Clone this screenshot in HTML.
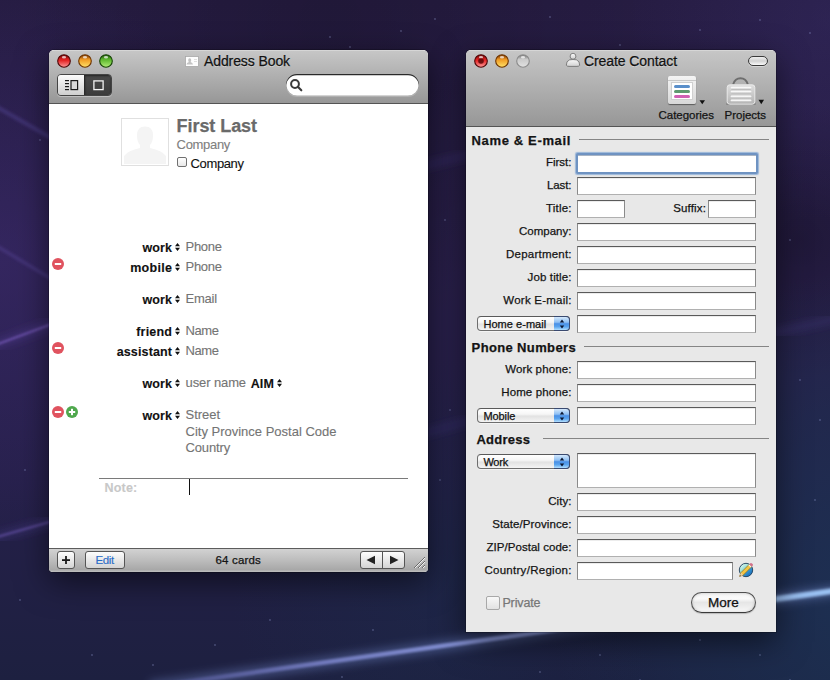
<!DOCTYPE html>
<html><head><meta charset="utf-8">
<style>
*{box-sizing:border-box;margin:0;padding:0}
html,body{width:830px;height:680px;overflow:hidden}
body{position:relative;font-family:"Liberation Sans",sans-serif;
background:linear-gradient(180deg,#261c42 0%,#2a204c 40%,#26204a 70%,#1d2040 100%);}
.a{position:absolute}
.t{position:absolute;white-space:nowrap;line-height:1;-webkit-text-stroke:0.12px currentColor}
.s2{-webkit-text-stroke:0.25px currentColor}
.win{position:absolute;overflow:hidden}
#w1{left:49px;top:50px;width:379px;height:522px;border-radius:5px 5px 4px 4px;background:#fff;
 box-shadow:0 10px 32px rgba(0,0,0,0.55),0 0 0 1px rgba(0,0,0,0.2)}
#w2{left:466px;top:50px;width:310px;height:582px;border-radius:5px 5px 0 0;background:#e8e8e8;
 box-shadow:0 10px 32px rgba(0,0,0,0.55),0 0 0 1px rgba(0,0,0,0.2)}
.tb{position:absolute;left:0;top:0;width:100%;background:linear-gradient(180deg,#e6e6e6 0px,#c6c6c6 1px,#979797 100%);border-bottom:1px solid #545454}
.tl{position:absolute;width:14px;height:14px;border-radius:50%}
.red{background:radial-gradient(circle at 50% 20%,#ffe6e6 0,#ffb0b0 10%,rgba(255,80,80,0) 32%),radial-gradient(circle at 50% 80%,#ffb0b0 0,#f04040 40%,#c01616 72%,#7e0c0c 100%);box-shadow:0 0 0 0.6px rgba(90,10,10,0.8)}
.yel{background:radial-gradient(circle at 50% 20%,#fff6dc 0,#ffe0a0 10%,rgba(255,200,80,0) 32%),radial-gradient(circle at 50% 80%,#ffe680 0,#f5ae2a 40%,#c97a06 72%,#7a4800 100%);box-shadow:0 0 0 0.6px rgba(100,60,0,0.8)}
.grn{background:radial-gradient(circle at 50% 20%,#f0ffe0 0,#c8f4a8 10%,rgba(160,230,100,0) 32%),radial-gradient(circle at 50% 80%,#c4f49a 0,#72c840 40%,#3c9418 72%,#1d5a06 100%);box-shadow:0 0 0 0.6px rgba(20,70,5,0.8)}
.gry{background:radial-gradient(circle at 50% 20%,#fcfcfc 0,#eeeeee 10%,rgba(230,230,230,0) 32%),radial-gradient(circle at 50% 80%,#ececec 0,#d2d2d2 40%,#b4b4b4 72%,#8c8c8c 100%);box-shadow:0 0 0 0.6px rgba(110,110,110,0.8)}
.fld{position:absolute;background:#fff;border:1px solid #8a8a8a;border-top-color:#5a5a5a;border-bottom-color:#b0b0b0;box-shadow:inset 0 1px 0 #ececec}
.pop{position:absolute;height:15px;border-radius:4px;border:1px solid #6e6e6e;border-top-color:#5a5a5a;background:linear-gradient(180deg,#ffffff 0%,#f6f6f6 40%,#e2e2e2 55%,#f4f4f4 100%);box-shadow:0 1px 0 rgba(255,255,255,0.5)}
.pop .arr{position:absolute;right:-1px;top:-1px;width:16px;height:15px;border-radius:0 4px 4px 0;border:1px solid #3a4a70;border-left:none;background:linear-gradient(180deg,#d4e8fc 0%,#8fc0f4 40%,#4a90e6 52%,#5aa4ee 75%,#b4e0ff 100%)}
.circ{position:absolute;width:12px;height:12px;border-radius:50%}
</style></head><body>
<svg class="a" style="left:0;top:0" width="830" height="680">
<defs>
<radialGradient id="gpurp" cx="0" cy="260" r="280" gradientUnits="userSpaceOnUse">
 <stop offset="0" stop-color="#3e2c72" stop-opacity="0.5"/><stop offset="1" stop-color="#3a2a70" stop-opacity="0"/></radialGradient>
<radialGradient id="gblue" cx="880" cy="600" r="330" gradientUnits="userSpaceOnUse">
 <stop offset="0" stop-color="#1c3456" stop-opacity="0.85"/><stop offset="0.6" stop-color="#1c3050" stop-opacity="0.5"/><stop offset="1" stop-color="#1c3050" stop-opacity="0"/></radialGradient>
<linearGradient id="streak1" x1="150" y1="687" x2="840" y2="590" gradientUnits="userSpaceOnUse">
 <stop offset="0" stop-color="#6a6ab8" stop-opacity="0.3"/><stop offset="0.25" stop-color="#8088d0" stop-opacity="0.8"/><stop offset="0.6" stop-color="#94a4e8" stop-opacity="0.95"/><stop offset="1" stop-color="#98c4f4" stop-opacity="1"/></linearGradient>
<filter id="blur1"><feGaussianBlur stdDeviation="0.9"/></filter>
<filter id="blur2"><feGaussianBlur stdDeviation="1.6"/></filter>
<filter id="blur5"><feGaussianBlur stdDeviation="4"/></filter>
</defs>
<radialGradient id="gdark" cx="330" cy="20" r="320" gradientUnits="userSpaceOnUse">
 <stop offset="0" stop-color="#000" stop-opacity="0.16"/><stop offset="1" stop-color="#000" stop-opacity="0"/></radialGradient>
<radialGradient id="gtr" cx="830" cy="20" r="200" gradientUnits="userSpaceOnUse">
 <stop offset="0" stop-color="#3a3070" stop-opacity="0.35"/><stop offset="1" stop-color="#3a3070" stop-opacity="0"/></radialGradient>
<radialGradient id="gdark2" cx="800" cy="240" r="140" gradientUnits="userSpaceOnUse">
 <stop offset="0" stop-color="#000" stop-opacity="0.25"/><stop offset="1" stop-color="#000" stop-opacity="0"/></radialGradient>
<rect width="830" height="680" fill="url(#gdark)"/>
<rect width="830" height="680" fill="url(#gdark2)"/>
<rect width="830" height="680" fill="url(#gtr)"/>
<rect width="830" height="680" fill="url(#gpurp)"/>
<radialGradient id="gblue2" cx="450" cy="580" r="220" gradientUnits="userSpaceOnUse">
 <stop offset="0" stop-color="#1c2c4c" stop-opacity="0.5"/><stop offset="1" stop-color="#1c2c4c" stop-opacity="0"/></radialGradient>
<rect width="830" height="680" fill="url(#gblue)"/>
<rect width="830" height="680" fill="url(#gblue2)"/>
<path d="M150 687 L 840 590" stroke="#7890d8" stroke-opacity="0.35" stroke-width="12" fill="none" filter="url(#blur5)"/>
<path d="M150 687 L 840 590" stroke="url(#streak1)" stroke-width="4.5" fill="none" filter="url(#blur1)"/>
<path d="M620 621 L 840 590" stroke="#a0c4f4" stroke-opacity="0.45" stroke-width="7" fill="none" filter="url(#blur2)"/>
<path d="M-10 347 L 60 321" stroke="#8060c0" stroke-opacity="0.75" stroke-width="2.2" fill="none" filter="url(#blur1)"/>
<path d="M-10 347 L 60 321" stroke="#6048a8" stroke-opacity="0.3" stroke-width="9" fill="none" filter="url(#blur5)"/>
<path d="M-10 539 L 60 519" stroke="#7a64c0" stroke-opacity="0.6" stroke-width="2" fill="none" filter="url(#blur1)"/>
<path d="M-10 539 L 60 519" stroke="#5a48a8" stroke-opacity="0.3" stroke-width="8" fill="none" filter="url(#blur5)"/>
<path d="M-10 242 L 60 284" stroke="#5a48a0" stroke-opacity="0.45" stroke-width="3" fill="none" filter="url(#blur2)"/>
<path d="M-10 103 L 60 143" stroke="#5a48a0" stroke-opacity="0.4" stroke-width="4" fill="none" filter="url(#blur2)"/>
<path d="M400 440 L 480 418" stroke="#4a4090" stroke-opacity="0.35" stroke-width="6" fill="none" filter="url(#blur5)"/>
<path d="M400 172 L 480 152" stroke="#4a4090" stroke-opacity="0.35" stroke-width="6" fill="none" filter="url(#blur5)"/>
<path d="M770 334 L 840 318" stroke="#5a4aa0" stroke-opacity="0.3" stroke-width="6" fill="none" filter="url(#blur5)"/>
<circle cx="107" cy="61" r="0.9" fill="#a0a8e0" opacity="0.35"/>
<circle cx="350" cy="47" r="0.9" fill="#a0a8e0" opacity="0.35"/>
<circle cx="330" cy="37" r="0.9" fill="#a0a8e0" opacity="0.35"/>
<circle cx="401" cy="31" r="0.9" fill="#a0a8e0" opacity="0.35"/>
<circle cx="435" cy="19" r="0.9" fill="#a0a8e0" opacity="0.35"/>
<circle cx="550" cy="17" r="0.9" fill="#a0a8e0" opacity="0.35"/>
<circle cx="620" cy="45" r="0.9" fill="#a0a8e0" opacity="0.35"/>
<circle cx="700" cy="30" r="0.9" fill="#a0a8e0" opacity="0.35"/>
<circle cx="760" cy="20" r="0.9" fill="#a0a8e0" opacity="0.35"/>
<circle cx="810" cy="33" r="0.9" fill="#a0a8e0" opacity="0.35"/>
<circle cx="820" cy="420" r="0.9" fill="#a0a8e0" opacity="0.35"/>
<circle cx="800" cy="380" r="0.9" fill="#a0a8e0" opacity="0.35"/>
<circle cx="20" cy="600" r="0.9" fill="#a0a8e0" opacity="0.35"/>
<circle cx="92" cy="655" r="0.9" fill="#a0a8e0" opacity="0.35"/>
<circle cx="153" cy="665" r="0.9" fill="#a0a8e0" opacity="0.35"/>
<circle cx="215" cy="645" r="0.9" fill="#a0a8e0" opacity="0.35"/>
<circle cx="270" cy="620" r="0.9" fill="#a0a8e0" opacity="0.35"/>
<circle cx="342" cy="677" r="0.9" fill="#a0a8e0" opacity="0.35"/>
<circle cx="373" cy="630" r="0.9" fill="#a0a8e0" opacity="0.35"/>
<circle cx="475" cy="618" r="0.9" fill="#a0a8e0" opacity="0.35"/>
<circle cx="540" cy="672" r="0.9" fill="#a0a8e0" opacity="0.35"/>
<circle cx="640" cy="680" r="0.9" fill="#a0a8e0" opacity="0.35"/>
<circle cx="700" cy="640" r="0.9" fill="#a0a8e0" opacity="0.35"/>
<circle cx="790" cy="680" r="0.9" fill="#a0a8e0" opacity="0.35"/>
<circle cx="40" cy="140" r="0.9" fill="#a0a8e0" opacity="0.35"/>
<circle cx="25" cy="470" r="0.9" fill="#a0a8e0" opacity="0.35"/>
<circle cx="445" cy="220" r="0.9" fill="#a0a8e0" opacity="0.35"/>
<circle cx="450" cy="410" r="0.9" fill="#a0a8e0" opacity="0.35"/>
<circle cx="440" cy="480" r="0.9" fill="#a0a8e0" opacity="0.35"/>
<circle cx="790" cy="240" r="0.9" fill="#a0a8e0" opacity="0.35"/>
<circle cx="815" cy="500" r="0.9" fill="#a0a8e0" opacity="0.35"/>
<circle cx="600" cy="655" r="0.9" fill="#a0a8e0" opacity="0.35"/>
<circle cx="760" cy="655" r="0.9" fill="#a0a8e0" opacity="0.35"/>
</svg>
<div class="win" id="w1">
 <div class="tb" style="height:54px"></div>
 <div class="a" style="left:0;top:498px;width:379px;height:24px;border-top:1px solid #5c5c5c;background:linear-gradient(180deg,#d2d2d2 0%,#bcbcbc 50%,#a8a8a8 90%,#c0c0c0 100%)"></div>
</div>
<svg class="a" width="0" height="0"><defs><linearGradient id="tlsh" x1="0" y1="0" x2="0" y2="1"><stop offset="0" stop-color="#000" stop-opacity="0.35"/><stop offset="0.35" stop-color="#000" stop-opacity="0"/></linearGradient></defs></svg>
<svg class="a" style="left:57px;top:54px" width="14" height="14"><defs><linearGradient id="lg6461" x1="0" y1="0" x2="0" y2="1"><stop offset="0" stop-color="#b81010"/><stop offset="0.45" stop-color="#e42424"/><stop offset="1" stop-color="#ff9c9c"/></linearGradient></defs><circle cx="7" cy="7" r="6.3" fill="url(#lg6461)" stroke="#4a0606" stroke-width="1.1"/><circle cx="7" cy="7" r="5.8" fill="url(#tlsh)"/><ellipse cx="7" cy="3.3" rx="2.1" ry="1.2" fill="#fff" opacity="0.7"/></svg>
<svg class="a" style="left:78px;top:54px" width="14" height="14"><defs><linearGradient id="lg8561" x1="0" y1="0" x2="0" y2="1"><stop offset="0" stop-color="#c86008"/><stop offset="0.45" stop-color="#f2a22a"/><stop offset="1" stop-color="#ffe46a"/></linearGradient></defs><circle cx="7" cy="7" r="6.3" fill="url(#lg8561)" stroke="#6a3200" stroke-width="1.1"/><circle cx="7" cy="7" r="5.8" fill="url(#tlsh)"/><ellipse cx="7" cy="3.3" rx="2.1" ry="1.2" fill="#fff" opacity="0.7"/></svg>
<svg class="a" style="left:99px;top:54px" width="14" height="14"><defs><linearGradient id="lg10661" x1="0" y1="0" x2="0" y2="1"><stop offset="0" stop-color="#3a9216"/><stop offset="0.45" stop-color="#64bc34"/><stop offset="1" stop-color="#b4ee7a"/></linearGradient></defs><circle cx="7" cy="7" r="6.3" fill="url(#lg10661)" stroke="#154006" stroke-width="1.1"/><circle cx="7" cy="7" r="5.8" fill="url(#tlsh)"/><ellipse cx="7" cy="3.3" rx="2.1" ry="1.2" fill="#fff" opacity="0.7"/></svg>
<svg class="a" style="left:184px;top:55px" width="16" height="13"><rect x="1.5" y="1.5" width="13" height="10" fill="#fdfdfd" stroke="#a8a8a8" stroke-width="0.8"/>
<path d="M4.2 5 Q4.2 3.2 5.7 3.2 Q7.2 3.2 7.2 5 Q7.2 6.4 6.5 7 Q8.8 7.6 9 9.6 L2.4 9.6 Q2.6 7.6 4.9 7 Q4.2 6.4 4.2 5Z" fill="#c4c4c4"/>
<rect x="10" y="4" width="3" height="0.8" fill="#d8d8d8"/><rect x="10" y="6" width="3" height="0.8" fill="#d8d8d8"/></svg>
<div class="a" style="left:57px;top:74px;width:55px;height:22px;border-radius:4px;border:1px solid #444;overflow:hidden;box-shadow:0 1px 0 rgba(255,255,255,0.35)">
 <div class="a" style="left:0;top:0;width:26px;height:20px;background:linear-gradient(180deg,#fbfbfb,#cfcfcf)"></div>
 <div class="a" style="left:26px;top:0;width:27px;height:20px;background:linear-gradient(180deg,#4a4a4a,#3c3c3c);border-left:1px solid #2a2a2a;box-shadow:inset 0 1px 2px rgba(0,0,0,0.5)"></div>
</div>
<svg class="a" style="left:57px;top:74px" width="55" height="22">
 <g fill="#1a1a1a"><rect x="8" y="6" width="4" height="1.2"/><rect x="8" y="9" width="4" height="1.2"/><rect x="8" y="12" width="4" height="1.2"/><rect x="8" y="15" width="4" height="1.2"/></g>
 <rect x="14" y="6.6" width="6.6" height="9" fill="#d8d8d8" stroke="#1a1a1a" stroke-width="1.2"/>
 <rect x="36.9" y="6.9" width="9.2" height="8.7" fill="none" stroke="#f4f4f4" stroke-width="1.3"/>
</svg>
<div class="a" style="left:286px;top:74px;width:133px;height:22px;border-radius:11px;background:#fff;box-shadow:inset 0 1.2px 0.6px rgba(0,0,0,0.8),inset 0 0 0 0.5px rgba(0,0,0,0.35),0 1px 0 rgba(255,255,255,0.2)"></div>
<svg class="a" style="left:288px;top:77px" width="18" height="18"><circle cx="7" cy="7" r="3.9" fill="none" stroke="#3a3a3a" stroke-width="2"/><line x1="9.8" y1="9.8" x2="13.3" y2="13.3" stroke="#3a3a3a" stroke-width="2.1" stroke-linecap="round"/></svg>
<div class="a" style="left:121px;top:118px;width:48px;height:48px;border:1px solid #e0e0e0;background:#fff"></div>
<svg class="a" style="left:122px;top:119px" width="46" height="46"><g fill="#f4f4f4"><path d="M15 16.5 Q15 7.5 23 7.5 Q31 7.5 31 16.5 Q31 23 28 26 L28 29 Q40 31.5 44 37 L44 45 L2 45 L2 37 Q6 31.5 18 29 L18 26 Q15 23 15 16.5Z"/></g></svg>
<div class="a" style="left:177px;top:157px;width:10px;height:10px;border:1px solid #707070;border-radius:2px;background:linear-gradient(180deg,#fff,#e8e8e8)"></div>
<svg class="a" style="left:175px;top:243px" width="6" height="8"><path d="M0 3.2 L2.5 0 L5 3.2Z M0 4.8 L2.5 8 L5 4.8Z" fill="#111"/></svg>
<svg class="a" style="left:175px;top:263px" width="6" height="8"><path d="M0 3.2 L2.5 0 L5 3.2Z M0 4.8 L2.5 8 L5 4.8Z" fill="#111"/></svg>
<svg class="a" style="left:175px;top:295px" width="6" height="8"><path d="M0 3.2 L2.5 0 L5 3.2Z M0 4.8 L2.5 8 L5 4.8Z" fill="#111"/></svg>
<svg class="a" style="left:175px;top:327px" width="6" height="8"><path d="M0 3.2 L2.5 0 L5 3.2Z M0 4.8 L2.5 8 L5 4.8Z" fill="#111"/></svg>
<svg class="a" style="left:175px;top:347px" width="6" height="8"><path d="M0 3.2 L2.5 0 L5 3.2Z M0 4.8 L2.5 8 L5 4.8Z" fill="#111"/></svg>
<svg class="a" style="left:175px;top:379px" width="6" height="8"><path d="M0 3.2 L2.5 0 L5 3.2Z M0 4.8 L2.5 8 L5 4.8Z" fill="#111"/></svg>
<svg class="a" style="left:175px;top:411px" width="6" height="8"><path d="M0 3.2 L2.5 0 L5 3.2Z M0 4.8 L2.5 8 L5 4.8Z" fill="#111"/></svg>
<svg class="a" style="left:277px;top:379px" width="6" height="8"><path d="M0 3.2 L2.5 0 L5 3.2Z M0 4.8 L2.5 8 L5 4.8Z" fill="#111"/></svg>
<svg class="a" style="left:52px;top:258px" width="12" height="12"><circle cx="6" cy="6" r="6" fill="#e0535f"/><rect x="2.8" y="5" width="6.4" height="2" fill="#fff"/></svg>
<svg class="a" style="left:52px;top:341.5px" width="12" height="12"><circle cx="6" cy="6" r="6" fill="#e0535f"/><rect x="2.8" y="5" width="6.4" height="2" fill="#fff"/></svg>
<svg class="a" style="left:52px;top:406px" width="12" height="12"><circle cx="6" cy="6" r="6" fill="#e0535f"/><rect x="2.8" y="5" width="6.4" height="2" fill="#fff"/></svg>
<svg class="a" style="left:66px;top:406px" width="12" height="12"><circle cx="6" cy="6" r="6" fill="#4fa84d"/><rect x="2.8" y="5" width="6.4" height="2" fill="#fff"/><rect x="5" y="2.8" width="2" height="6.4" fill="#fff"/></svg>
<div class="a" style="left:99px;top:478px;width:309px;height:1px;background:#7a7a7a"></div>
<div class="a" style="left:189px;top:479px;width:1px;height:16px;background:#111"></div>
<div class="a" style="left:57px;top:551px;width:18px;height:18px;border-radius:3px;border:1px solid #555;background:linear-gradient(180deg,#fdfdfd,#d4d4d4)"></div>
<svg class="a" style="left:57px;top:551px" width="18" height="18"><rect x="5" y="8.2" width="8" height="1.8" fill="#1a1a1a"/><rect x="8.1" y="5" width="1.8" height="8" fill="#1a1a1a"/></svg>
<div class="a" style="left:85px;top:551px;width:40px;height:18px;border-radius:3px;border:1px solid #555;background:linear-gradient(180deg,#fdfdfd,#d4d4d4)"></div>
<div class="a" style="left:360px;top:551px;width:45px;height:18px;border-radius:3px;border:1px solid #555;background:linear-gradient(180deg,#fdfdfd,#d4d4d4)"></div>
<div class="a" style="left:382px;top:552px;width:1px;height:16px;background:#555"></div>
<svg class="a" style="left:360px;top:551px" width="45" height="18"><path d="M6.5 9 L15 4.8 L15 13.2Z" fill="#222"/><path d="M38.5 9 L30 4.8 L30 13.2Z" fill="#222"/></svg>
<svg class="a" style="left:412.5px;top:556px" width="13" height="13"><g stroke="#6a6a6a" stroke-width="1"><line x1="1" y1="12" x2="12" y2="1"/><line x1="5" y1="12" x2="12" y2="5"/><line x1="9" y1="12" x2="12" y2="9"/></g><g stroke="#f0f0f0" stroke-width="1"><line x1="2" y1="12" x2="12" y2="2"/><line x1="6" y1="12" x2="12" y2="6"/><line x1="10" y1="12" x2="12" y2="10"/></g></svg>
<div class="win" id="w2">
 <div class="tb" style="height:77px"></div>
</div>
<svg class="a" style="left:474px;top:54px" width="14" height="14"><defs><linearGradient id="lg48161" x1="0" y1="0" x2="0" y2="1"><stop offset="0" stop-color="#b81010"/><stop offset="0.45" stop-color="#e42424"/><stop offset="1" stop-color="#ff9c9c"/></linearGradient></defs><circle cx="7" cy="7" r="6.3" fill="url(#lg48161)" stroke="#4a0606" stroke-width="1.1"/><circle cx="7" cy="7" r="5.8" fill="url(#tlsh)"/><ellipse cx="7" cy="3.3" rx="2.1" ry="1.2" fill="#fff" opacity="0.7"/><circle cx="7" cy="7" r="2.8" fill="#5a0606" opacity="0.85"/></svg>
<svg class="a" style="left:495px;top:54px" width="14" height="14"><defs><linearGradient id="lg50261" x1="0" y1="0" x2="0" y2="1"><stop offset="0" stop-color="#c86008"/><stop offset="0.45" stop-color="#f2a22a"/><stop offset="1" stop-color="#ffe46a"/></linearGradient></defs><circle cx="7" cy="7" r="6.3" fill="url(#lg50261)" stroke="#6a3200" stroke-width="1.1"/><circle cx="7" cy="7" r="5.8" fill="url(#tlsh)"/><ellipse cx="7" cy="3.3" rx="2.1" ry="1.2" fill="#fff" opacity="0.7"/></svg>
<svg class="a" style="left:516px;top:54px" width="14" height="14"><defs><linearGradient id="lg52361" x1="0" y1="0" x2="0" y2="1"><stop offset="0" stop-color="#bdbdbd"/><stop offset="0.45" stop-color="#cdcdcd"/><stop offset="1" stop-color="#e2e2e2"/></linearGradient></defs><circle cx="7" cy="7" r="6.3" fill="url(#lg52361)" stroke="#8a8a8a" stroke-width="1.1"/><circle cx="7" cy="7" r="5.8" fill="url(#tlsh)"/><ellipse cx="7" cy="3.3" rx="2.1" ry="1.2" fill="#fff" opacity="0.7"/></svg>
<svg class="a" style="left:565px;top:52px" width="16" height="15"><defs><linearGradient id="pg" x1="0" y1="0" x2="0" y2="1"><stop offset="0" stop-color="#fafafa"/><stop offset="1" stop-color="#d0d0d0"/></linearGradient></defs>
<path d="M5.2 4 Q5.2 1.3 8 1.3 Q10.8 1.3 10.8 4 L10.8 5 Q10.8 7.2 8 7.2 Q5.2 7.2 5.2 5Z" fill="url(#pg)" stroke="#5a5a5a" stroke-width="0.7"/><path d="M1.3 13.2 Q1.2 9 4.5 7.9 Q8 7.2 11.5 7.9 Q14.8 9 14.7 13.2 Q14 14.4 12 14.4 L4 14.4 Q2 14.4 1.3 13.2Z" fill="url(#pg)" stroke="#5a5a5a" stroke-width="0.7"/></svg>
<div class="a" style="left:748px;top:56px;width:20px;height:10px;border-radius:5px;border:1px solid #3a3a3a;background:linear-gradient(180deg,#f0f0f0 0%,#d2d2d2 50%,#fafafa 100%);box-shadow:0 1px 0 rgba(255,255,255,0.4)"></div>
<div class="a" style="left:668px;top:76px;width:28px;height:28px;border-radius:2px;background:linear-gradient(180deg,#f4f4f4,#d8d8d8);box-shadow:0 1px 1px rgba(0,0,0,0.45)"></div>
<div class="a" style="left:668px;top:80px;width:28px;height:1px;background:#c8c8c8"></div>
<div class="a" style="left:671px;top:82px;width:22px;height:18px;background:#fff;border:1px solid #d0d0d0"></div>
<div class="a" style="left:673.5px;top:85px;width:16.5px;height:3px;border-radius:1.5px;background:#5a8fca"></div>
<div class="a" style="left:673.5px;top:90px;width:16.5px;height:3px;border-radius:1.5px;background:#5e9a70"></div>
<div class="a" style="left:673.5px;top:95px;width:16.5px;height:3px;border-radius:1.5px;background:#d060b4"></div>
<svg class="a" style="left:699px;top:100px" width="7" height="6"><path d="M0.5 0.3 L6 0.3 L3.25 4.3Z" fill="#111"/></svg>
<svg class="a" style="left:724px;top:76px" width="34" height="32">
<defs><linearGradient id="bc" x1="0" y1="0" x2="0" y2="1"><stop offset="0" stop-color="#dedede"/><stop offset="1" stop-color="#b4b4b4"/></linearGradient>
<linearGradient id="sl" x1="0" y1="0" x2="0" y2="1"><stop offset="0" stop-color="#ffffff"/><stop offset="0.55" stop-color="#f2f2f2"/><stop offset="1" stop-color="#a8a8a8"/></linearGradient></defs>
<path d="M9.2 8.2 Q11 2.2 16.5 2.2 Q22 2.2 23.8 8.2" fill="none" stroke="#6e6e6e" stroke-width="1.9"/>
<rect x="2" y="27" width="30" height="2" rx="1" fill="#000" opacity="0.18"/>
<rect x="3.2" y="8.8" width="27.6" height="19.4" rx="2.6" fill="url(#bc)" stroke="#ededed" stroke-width="0.9"/>
<g fill="url(#sl)"><rect x="6.8" y="10.8" width="20.5" height="2.6" rx="0.8"/><rect x="6.8" y="14.7" width="20.5" height="2.6" rx="0.8"/><rect x="6.8" y="19.5" width="20.5" height="2.6" rx="0.8"/><rect x="6.8" y="23.4" width="20.5" height="2.6" rx="0.8"/></g>
</svg>
<svg class="a" style="left:758px;top:99px" width="7" height="6"><path d="M0.5 0.8 L6 0.8 L3.25 5.2Z" fill="#111"/></svg>
<div class="a" style="left:579px;top:139px;width:190px;height:1px;background:#858585"></div>
<div class="a" style="left:584px;top:346px;width:185px;height:1px;background:#858585"></div>
<div class="a" style="left:543px;top:438px;width:226px;height:1px;background:#858585"></div>
<div class="a" style="left:576px;top:152.5px;width:181.5px;height:21px;border-radius:2px;background:#6f93c2;box-shadow:0 0 1px 0.3px rgba(120,160,210,0.7)"></div>
<div class="a" style="left:578px;top:154.5px;width:177.5px;height:17px;background:#fff;border-top:1px solid #a8b4c4"></div>
<div class="fld" style="left:577px;top:177px;width:179px;height:18px"></div>
<div class="fld" style="left:577px;top:200px;width:48px;height:18px"></div>
<div class="fld" style="left:708px;top:200px;width:48px;height:18px"></div>
<div class="fld" style="left:577px;top:223px;width:179px;height:18px"></div>
<div class="fld" style="left:577px;top:246px;width:179px;height:18px"></div>
<div class="fld" style="left:577px;top:269px;width:179px;height:18px"></div>
<div class="fld" style="left:577px;top:292px;width:179px;height:18px"></div>
<div class="pop" style="left:477px;top:316px;width:93px"><div class="arr"></div></div>
<svg class="a" style="left:559px;top:318.5px" width="6" height="10"><path d="M0.8 3.6 L3 0.6 L5.2 3.6Z M0.8 6.4 L3 9.4 L5.2 6.4Z" fill="#0c1630"/></svg>
<div class="fld" style="left:577px;top:315px;width:179px;height:18px"></div>
<div class="fld" style="left:577px;top:361px;width:179px;height:18px"></div>
<div class="fld" style="left:577px;top:384px;width:179px;height:18px"></div>
<div class="pop" style="left:477px;top:408px;width:93px"><div class="arr"></div></div>
<svg class="a" style="left:559px;top:410.5px" width="6" height="10"><path d="M0.8 3.6 L3 0.6 L5.2 3.6Z M0.8 6.4 L3 9.4 L5.2 6.4Z" fill="#0c1630"/></svg>
<div class="fld" style="left:577px;top:407px;width:179px;height:18px"></div>
<div class="pop" style="left:477px;top:454px;width:93px"><div class="arr"></div></div>
<svg class="a" style="left:559px;top:456.5px" width="6" height="10"><path d="M0.8 3.6 L3 0.6 L5.2 3.6Z M0.8 6.4 L3 9.4 L5.2 6.4Z" fill="#0c1630"/></svg>
<div class="fld" style="left:577px;top:453px;width:179px;height:35px"></div>
<div class="fld" style="left:577px;top:493px;width:179px;height:18px"></div>
<div class="fld" style="left:577px;top:516px;width:179px;height:18px"></div>
<div class="fld" style="left:577px;top:539px;width:179px;height:18px"></div>
<div class="fld" style="left:577px;top:562px;width:156px;height:18px"></div>
<svg class="a" style="left:738px;top:562px" width="16" height="16">
<defs><linearGradient id="glb" x1="0.15" y1="0.1" x2="0.85" y2="0.9"><stop offset="0" stop-color="#e0f8f0"/><stop offset="0.4" stop-color="#8ad8d0"/><stop offset="0.55" stop-color="#3aa0d8"/><stop offset="1" stop-color="#1a6ab8"/></linearGradient></defs>
<circle cx="8" cy="8" r="6.7" fill="url(#glb)" stroke="#1e3e5a" stroke-width="0.9"/>
<path d="M1.6 14.4 L3 10.6 L11.2 2.4 L13.6 4.8 L5.4 13 Z" fill="#f4c440" stroke="#8a6010" stroke-width="0.6"/>
<path d="M11.2 2.4 L12.3 1.3 Q13.2 0.6 14 1.4 L14.6 2 Q15.4 2.8 14.7 3.7 L13.6 4.8Z" fill="#d4708a"/>
<path d="M10.4 3.2 L11.2 2.4 L13.6 4.8 L12.8 5.6Z" fill="#f8f8f0"/>
<path d="M1.6 14.4 L3 10.6 L5.4 13Z" fill="#e8cfa0"/>
<path d="M1.6 14.4 L2.1 13.1 L2.9 13.9Z" fill="#3a2a1a"/>
</svg>
<div class="a" style="left:486px;top:596px;width:13.5px;height:13.5px;border-radius:2px;border:1px solid #a8a8a8;background:linear-gradient(180deg,#f8f8f8,#e2e2e2)"></div>
<div class="a" style="left:691px;top:592px;width:65px;height:21px;border-radius:10.5px;border:1px solid #505050;border-bottom-color:#3a3a3a;background:linear-gradient(180deg,#f4f4f4 0%,#fafafa 30%,#e6e6e6 50%,#f0f0f0 80%,#ffffff 100%);box-shadow:inset 0 0 3px rgba(0,0,0,0.22),0 1px 1px rgba(0,0,0,0.2)"></div>
<div class="t s2" id="t0" style="top:54.01px;font-size:14px;font-weight:400;color:#111;letter-spacing:-0.098px;left:204.00px;text-shadow:0 1px 0 rgba(255,255,255,0.45);">Address Book<span class="bl" style="display:inline-block;width:0;height:0;vertical-align:baseline"></span></div>
<div class="t s2" id="t1" style="top:117.00px;font-size:18px;font-weight:700;color:#6a6a6a;letter-spacing:-0.063px;left:176.60px;">First Last<span class="bl" style="display:inline-block;width:0;height:0;vertical-align:baseline"></span></div>
<div class="t" id="t2" style="top:138.00px;font-size:13px;font-weight:400;color:#808080;letter-spacing:-0.320px;left:176.60px;">Company<span class="bl" style="display:inline-block;width:0;height:0;vertical-align:baseline"></span></div>
<div class="t" id="t3" style="top:157.00px;font-size:13px;font-weight:400;color:#111;letter-spacing:-0.377px;left:190.60px;">Company<span class="bl" style="display:inline-block;width:0;height:0;vertical-align:baseline"></span></div>
<div class="t" id="t4" style="top:242.01px;font-size:12.5px;font-weight:700;color:#111;letter-spacing:0.078px;right:658.00px;margin-right:-0.078px;">work<span class="bl" style="display:inline-block;width:0;height:0;vertical-align:baseline"></span></div>
<div class="t" id="t5" style="top:240.00px;font-size:13px;font-weight:400;color:#747474;letter-spacing:-0.279px;left:185.50px;">Phone<span class="bl" style="display:inline-block;width:0;height:0;vertical-align:baseline"></span></div>
<div class="t" id="t6" style="top:262.01px;font-size:12.5px;font-weight:700;color:#111;letter-spacing:0.317px;right:658.00px;margin-right:-0.317px;">mobile<span class="bl" style="display:inline-block;width:0;height:0;vertical-align:baseline"></span></div>
<div class="t" id="t7" style="top:260.00px;font-size:13px;font-weight:400;color:#747474;letter-spacing:-0.279px;left:185.50px;">Phone<span class="bl" style="display:inline-block;width:0;height:0;vertical-align:baseline"></span></div>
<div class="t" id="t8" style="top:294.00px;font-size:12.5px;font-weight:700;color:#111;letter-spacing:0.078px;right:658.00px;margin-right:-0.078px;">work<span class="bl" style="display:inline-block;width:0;height:0;vertical-align:baseline"></span></div>
<div class="t" id="t9" style="top:292.00px;font-size:13px;font-weight:400;color:#747474;letter-spacing:-0.203px;left:185.50px;">Email<span class="bl" style="display:inline-block;width:0;height:0;vertical-align:baseline"></span></div>
<div class="t" id="t10" style="top:326.01px;font-size:12.5px;font-weight:700;color:#111;letter-spacing:0.211px;right:658.00px;margin-right:-0.211px;">friend<span class="bl" style="display:inline-block;width:0;height:0;vertical-align:baseline"></span></div>
<div class="t" id="t11" style="top:324.00px;font-size:13px;font-weight:400;color:#747474;letter-spacing:-0.422px;left:185.50px;">Name<span class="bl" style="display:inline-block;width:0;height:0;vertical-align:baseline"></span></div>
<div class="t" id="t12" style="top:346.01px;font-size:12.5px;font-weight:700;color:#111;letter-spacing:0.144px;right:658.00px;margin-right:-0.144px;">assistant<span class="bl" style="display:inline-block;width:0;height:0;vertical-align:baseline"></span></div>
<div class="t" id="t13" style="top:344.01px;font-size:13px;font-weight:400;color:#747474;letter-spacing:-0.422px;left:185.50px;">Name<span class="bl" style="display:inline-block;width:0;height:0;vertical-align:baseline"></span></div>
<div class="t" id="t14" style="top:378.01px;font-size:12.5px;font-weight:700;color:#111;letter-spacing:0.078px;right:658.00px;margin-right:-0.078px;">work<span class="bl" style="display:inline-block;width:0;height:0;vertical-align:baseline"></span></div>
<div class="t" id="t15" style="top:376.00px;font-size:13px;font-weight:400;color:#747474;letter-spacing:-0.102px;left:185.50px;">user name<span class="bl" style="display:inline-block;width:0;height:0;vertical-align:baseline"></span></div>
<div class="t" id="t16" style="top:410.01px;font-size:12.5px;font-weight:700;color:#111;letter-spacing:0.078px;right:658.00px;margin-right:-0.078px;">work<span class="bl" style="display:inline-block;width:0;height:0;vertical-align:baseline"></span></div>
<div class="t" id="t17" style="top:408.00px;font-size:13px;font-weight:400;color:#747474;letter-spacing:-0.015px;left:185.50px;">Street<span class="bl" style="display:inline-block;width:0;height:0;vertical-align:baseline"></span></div>
<div class="t" id="t18" style="top:378.01px;font-size:12.5px;font-weight:700;color:#111;letter-spacing:0.126px;left:250.70px;">AIM<span class="bl" style="display:inline-block;width:0;height:0;vertical-align:baseline"></span></div>
<div class="t" id="t19" style="top:425.00px;font-size:13px;font-weight:400;color:#747474;letter-spacing:-0.001px;left:185.50px;">City Province Postal Code<span class="bl" style="display:inline-block;width:0;height:0;vertical-align:baseline"></span></div>
<div class="t" id="t20" style="top:441.00px;font-size:13px;font-weight:400;color:#747474;letter-spacing:-0.147px;left:185.50px;">Country<span class="bl" style="display:inline-block;width:0;height:0;vertical-align:baseline"></span></div>
<div class="t" id="t21" style="top:482.01px;font-size:12.5px;font-weight:700;color:#c8c8c8;letter-spacing:0.209px;left:104.50px;">Note:<span class="bl" style="display:inline-block;width:0;height:0;vertical-align:baseline"></span></div>
<div class="t" id="t22" style="top:555.00px;font-size:11.5px;font-weight:400;color:#2a6cc8;letter-spacing:-0.382px;left:95.50px;">Edit<span class="bl" style="display:inline-block;width:0;height:0;vertical-align:baseline"></span></div>
<div class="t s2" id="t23" style="top:555.00px;font-size:11.5px;font-weight:400;color:#141414;letter-spacing:0.174px;left:215.50px;">64 cards<span class="bl" style="display:inline-block;width:0;height:0;vertical-align:baseline"></span></div>
<div class="t s2" id="t24" style="top:54.01px;font-size:14px;font-weight:400;color:#111;letter-spacing:-0.084px;left:584.00px;text-shadow:0 1px 0 rgba(255,255,255,0.45);">Create Contact<span class="bl" style="display:inline-block;width:0;height:0;vertical-align:baseline"></span></div>
<div class="t s2" id="t25" style="top:110.00px;font-size:11.5px;font-weight:400;color:#141414;letter-spacing:-0.013px;left:658.50px;">Categories<span class="bl" style="display:inline-block;width:0;height:0;vertical-align:baseline"></span></div>
<div class="t s2" id="t26" style="top:110.00px;font-size:11.5px;font-weight:400;color:#141414;letter-spacing:-0.018px;left:724.60px;">Projects<span class="bl" style="display:inline-block;width:0;height:0;vertical-align:baseline"></span></div>
<div class="t s2" id="t27" style="top:134.00px;font-size:13px;font-weight:700;color:#141414;letter-spacing:0.643px;left:471.60px;">Name &amp; E-mail<span class="bl" style="display:inline-block;width:0;height:0;vertical-align:baseline"></span></div>
<div class="t s2" id="t28" style="top:341.00px;font-size:13px;font-weight:700;color:#141414;letter-spacing:0.363px;left:471.60px;">Phone Numbers<span class="bl" style="display:inline-block;width:0;height:0;vertical-align:baseline"></span></div>
<div class="t s2" id="t29" style="top:433.00px;font-size:13px;font-weight:700;color:#141414;letter-spacing:0.281px;left:476.40px;">Address<span class="bl" style="display:inline-block;width:0;height:0;vertical-align:baseline"></span></div>
<div class="t s2" id="t30" style="top:157.00px;font-size:11.5px;font-weight:400;color:#141414;letter-spacing:0.006px;right:258.50px;margin-right:-0.006px;">First:<span class="bl" style="display:inline-block;width:0;height:0;vertical-align:baseline"></span></div>
<div class="t s2" id="t31" style="top:180.00px;font-size:11.5px;font-weight:400;color:#141414;letter-spacing:-0.087px;right:258.50px;margin-right:0.087px;">Last:<span class="bl" style="display:inline-block;width:0;height:0;vertical-align:baseline"></span></div>
<div class="t s2" id="t32" style="top:203.00px;font-size:11.5px;font-weight:400;color:#141414;letter-spacing:0.179px;right:124.00px;margin-right:-0.179px;">Suffix:<span class="bl" style="display:inline-block;width:0;height:0;vertical-align:baseline"></span></div>
<div class="t s2" id="t33" style="top:203.00px;font-size:11.5px;font-weight:400;color:#141414;letter-spacing:0.183px;right:258.50px;margin-right:-0.183px;">Title:<span class="bl" style="display:inline-block;width:0;height:0;vertical-align:baseline"></span></div>
<div class="t s2" id="t34" style="top:226.00px;font-size:11.5px;font-weight:400;color:#141414;letter-spacing:0.022px;right:258.50px;margin-right:-0.022px;">Company:<span class="bl" style="display:inline-block;width:0;height:0;vertical-align:baseline"></span></div>
<div class="t s2" id="t35" style="top:249.00px;font-size:11.5px;font-weight:400;color:#141414;letter-spacing:0.211px;right:258.50px;margin-right:-0.211px;">Department:<span class="bl" style="display:inline-block;width:0;height:0;vertical-align:baseline"></span></div>
<div class="t s2" id="t36" style="top:272.00px;font-size:11.5px;font-weight:400;color:#141414;letter-spacing:0.117px;right:258.50px;margin-right:-0.117px;">Job title:<span class="bl" style="display:inline-block;width:0;height:0;vertical-align:baseline"></span></div>
<div class="t s2" id="t37" style="top:295.00px;font-size:11.5px;font-weight:400;color:#141414;letter-spacing:0.233px;right:258.50px;margin-right:-0.233px;">Work E-mail:<span class="bl" style="display:inline-block;width:0;height:0;vertical-align:baseline"></span></div>
<div class="t s2" id="t38" style="top:319.00px;font-size:11px;font-weight:400;color:#111;letter-spacing:0.049px;left:483.40px;">Home e-mail<span class="bl" style="display:inline-block;width:0;height:0;vertical-align:baseline"></span></div>
<div class="t s2" id="t39" style="top:364.00px;font-size:11.5px;font-weight:400;color:#141414;letter-spacing:0.136px;right:258.50px;margin-right:-0.136px;">Work phone:<span class="bl" style="display:inline-block;width:0;height:0;vertical-align:baseline"></span></div>
<div class="t s2" id="t40" style="top:387.00px;font-size:11.5px;font-weight:400;color:#141414;letter-spacing:0.123px;right:258.50px;margin-right:-0.123px;">Home phone:<span class="bl" style="display:inline-block;width:0;height:0;vertical-align:baseline"></span></div>
<div class="t s2" id="t41" style="top:411.00px;font-size:11px;font-weight:400;color:#111;letter-spacing:-0.068px;left:483.40px;">Mobile<span class="bl" style="display:inline-block;width:0;height:0;vertical-align:baseline"></span></div>
<div class="t s2" id="t42" style="top:457.00px;font-size:11px;font-weight:400;color:#111;letter-spacing:-0.242px;left:483.40px;">Work<span class="bl" style="display:inline-block;width:0;height:0;vertical-align:baseline"></span></div>
<div class="t s2" id="t43" style="top:496.00px;font-size:11.5px;font-weight:400;color:#141414;letter-spacing:0.080px;right:258.50px;margin-right:-0.080px;">City:<span class="bl" style="display:inline-block;width:0;height:0;vertical-align:baseline"></span></div>
<div class="t s2" id="t44" style="top:519.00px;font-size:11.5px;font-weight:400;color:#141414;letter-spacing:0.094px;right:258.50px;margin-right:-0.094px;">State/Province:<span class="bl" style="display:inline-block;width:0;height:0;vertical-align:baseline"></span></div>
<div class="t s2" id="t45" style="top:542.00px;font-size:11.5px;font-weight:400;color:#141414;letter-spacing:0.039px;right:258.50px;margin-right:-0.039px;">ZIP/Postal code:<span class="bl" style="display:inline-block;width:0;height:0;vertical-align:baseline"></span></div>
<div class="t s2" id="t46" style="top:565.00px;font-size:11.5px;font-weight:400;color:#141414;letter-spacing:0.286px;right:258.50px;margin-right:-0.286px;">Country/Region:<span class="bl" style="display:inline-block;width:0;height:0;vertical-align:baseline"></span></div>
<div class="t s2" id="t47" style="top:597.01px;font-size:12.5px;font-weight:400;color:#777;letter-spacing:-0.129px;left:502.40px;">Private<span class="bl" style="display:inline-block;width:0;height:0;vertical-align:baseline"></span></div>
<div class="t s2" id="t48" style="top:596.01px;font-size:13.5px;font-weight:400;color:#111;letter-spacing:-0.016px;left:708.00px;">More<span class="bl" style="display:inline-block;width:0;height:0;vertical-align:baseline"></span></div>
</body></html>
